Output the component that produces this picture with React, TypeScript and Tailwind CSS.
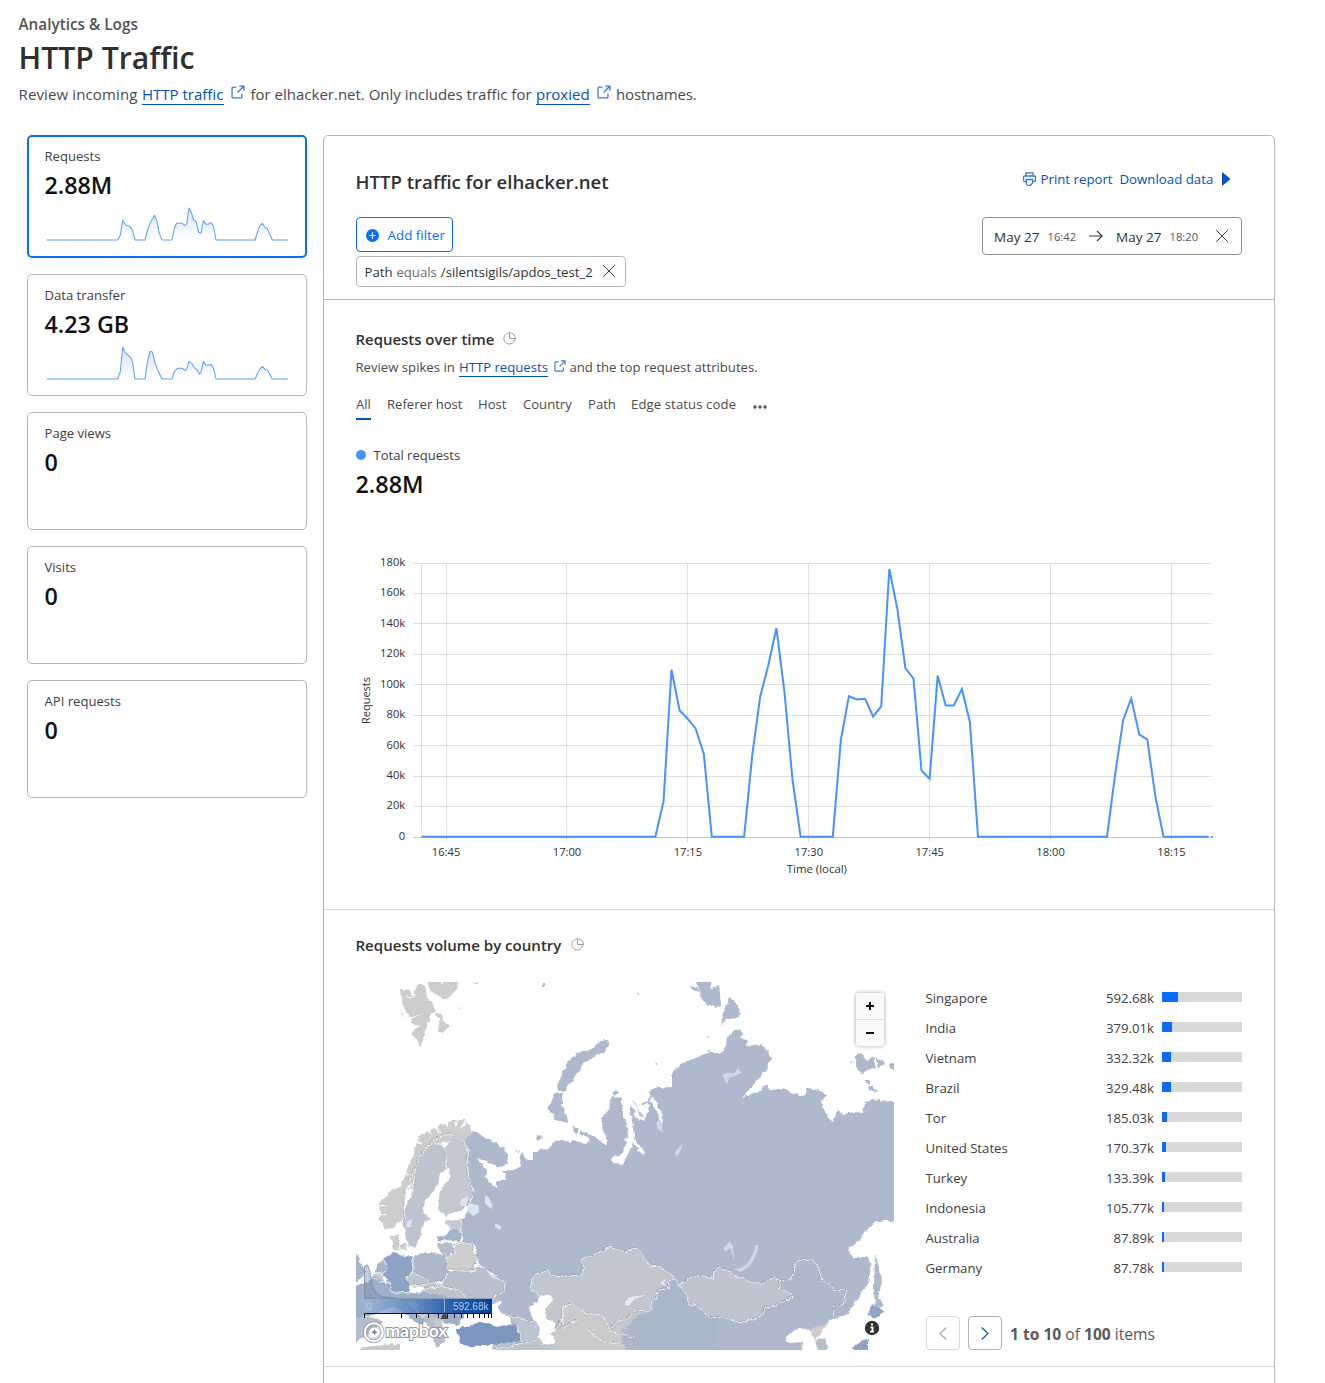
import React from "react";

const SERIES: [number, number][] = [
  [0, 837], [29, 837], [30, 801.7], [31, 670], [32, 710.8], [33, 719], [34, 729], [35, 754.3], [36, 837],
  [40, 837], [41, 756], [42, 697], [43, 665.5], [44, 628.5], [45, 692], [46, 780], [47, 837],
  [51, 837], [52, 740], [53, 696.5], [54, 699.7], [55, 699], [56, 716.8], [57, 706.7], [58, 569.3], [59, 609],
  [60, 668.3], [61, 679], [62, 770.8], [63, 779], [64, 676], [65, 705.7], [66, 705.7], [67, 689.2], [68, 722.5], [69, 837],
  [85, 837], [86, 775], [87, 720], [88, 699], [89, 734.7], [90, 740], [91, 797], [92, 837], [97.6, 837],
];
const LINE = SERIES.map(([m, y]) => `${(421.5 + m * 8.065).toFixed(1)},${y - 0.3}`).join(" ");

const REQ_SPARK =
  "80,345 293,345 301,330 308,286 316,299 330,305 337,315 345,345 375,345 383,315 390,295 404,271 411,290 418,325 426,345 456,345 463,310 470,295 487,295 494,302 500,296 507,249 514,262 521,285 529,290 536,322 543,324 550,287 558,298 565,298 572,292 580,303 588,345 705,345 718,305 727,295 735,308 742,311 757,345 803,345";
const DATA_SPARK =
  "80,345 293,345 301,322 308,249 315,266 325,274 333,282 338,296 345,345 375,345 382,296 390,262 397,264 404,294 414,320 426,345 456,345 463,323 472,313 487,313 495,320 500,316 507,292 515,298 522,310 530,316 538,330 543,325 550,292 558,304 575,302 582,318 588,345 705,345 718,318 727,307 735,316 742,318 757,345 803,345";

function Spark({ points, id }: { points: string; id: string }) {
  return (
    <svg className="block h-[44px] w-[250px]" viewBox="60 228 750 132">
      <defs>
        <linearGradient id={id} x1="0" y1="0" x2="0" y2="1">
          <stop offset="0" stopColor="#d5e4fb" />
          <stop offset="1" stopColor="#fff" />
        </linearGradient>
      </defs>
      <polygon points={points} fill={`url(#${id})`} />
      <polyline points={points} fill="none" stroke="#5ca0ff" strokeWidth="3.2" strokeLinejoin="round" />
    </svg>
  );
}

function Ext({ className }: { className: string }) {
  return (
    <svg className={className} viewBox="0 0 16 16" fill="none" stroke="#3b78d8" strokeWidth="1.5">
      <path d="M6 2.500H2.200a1 1 0 0 0-1 1v10.300a1 1 0 0 0 1 1h9.300a1 1 0 0 0 1-1V10M9.500 1.200h5.300v5.300M14.600 1.400 7.500 8.500" />
    </svg>
  );
}

function Pie() {
  return (
    <svg className="h-[13px] w-[13px]" viewBox="0 0 13 13" fill="none" stroke="#9a9a9a" strokeWidth="1">
      <path d="M4.500 1.500a5.400 5.400 0 1 0 7 6.500M6.500 .6v5.900h5.900A5.900 5.900 0 0 0 6.500 .6ZM6.500 .8a5.500 5.500 0 0 0-2 .7M12.200 6.500a5.500 5.500 0 0 1-.7 2" />
    </svg>
  );
}

function Cross({ className }: { className: string }) {
  return (
    <svg className={className} viewBox="0 0 12 12" stroke="#3f3f3f" strokeWidth="1">
      <path d="M.2.2 11.800 11.800M11.800.2.2 11.800" />
    </svg>
  );
}

function Card({ label, value, h, active, points, id }: { label: string; value: string; h: string; active?: boolean; points?: string; id?: string }) {
  return (
    <div
      className={`${h} rounded-[5px] bg-white ${active ? "border-2 border-[#0a6cff] pl-[15px] pt-[9px]" : "border border-[#b6b7b7] pl-[16px] pt-[10px]"}`}
    >
      <div className="h-[20px] pl-[0.500px] text-[13.100px] leading-[20px] text-[#404040]">{label}</div>
      <div className="mt-[3px] h-[32px] pl-[0.500px] text-[23.300px] font-semibold leading-[32px] text-[#111]">{value}</div>
      {points && id && (
        <div className="-ml-[4px]">
          <Spark points={points} id={id} />
        </div>
      )}
    </div>
  );
}

function TrafficChart() {
  return (
    <svg className="block h-[340px] w-[886px]" viewBox="356 545 886 340" fontFamily="'Open Sans','Noto Sans',sans-serif" fontSize="11.200" fill="#303030">
      <g stroke="#000" strokeOpacity=".12" shapeRendering="crispEdges">
        {[563.5, 593.5, 623.5, 654.5, 684.5, 715.5, 745.5, 776.5, 806.5].map((y) => (
          <path key={y} d={`M413 ${y}H1212`} />
        ))}
        {[446.5, 566.5, 687.5, 808.5, 929.5, 1050.5, 1171.5].map((x) => (
          <path key={x} d={`M${x} 563V842`} />
        ))}
        <path d="M421.5 563V837" />
        <path d="M413 837.5H1212" strokeOpacity=".22" />
      </g>
      <polyline points={LINE} fill="none" stroke="#4693ff" strokeWidth="2" strokeLinejoin="miter" />
      <path d="M1211 836.7h2" stroke="#4693ff" strokeWidth="1.6" />
      {["180k", "160k", "140k", "120k", "100k", "80k", "60k", "40k", "20k", "0"].map((t, i) => (
        <text key={t} x="405.2" y={565.800 + i * 30.45} textAnchor="end">{t}</text>
      ))}
      {["16:45", "17:00", "17:15", "17:30", "17:45", "18:00", "18:15"].map((t, i) => (
        <text key={t} x={446.1 + i * 120.9} y="856" textAnchor="middle">{t}</text>
      ))}
      <text x="816.9" y="873" textAnchor="middle" fontSize="11.400">Time (local)</text>
      <text transform="translate(369.5 700.5) rotate(-90)" textAnchor="middle" fontSize="11">Requests</text>
    </svg>
  );
}

const BORDERS = [
  "M190 145 180 120 200 70 215 40 250 0 285 25 290 90",
  "M250 0 300 -20 335 0 355 30 350 70 358 120 372 160 350 200 335 215",
  "M190 145 165 150 163 240",
  "M335 235 332 265 335 305 300 300 265 305",
  "M335 308 315 315 310 345 290 350 290 385",
  "M335 308 370 312 370 340 385 358 370 380 375 395 330 392 290 385",
  "M385 378 405 382 420 405 465 425 462 455 440 465",
  "M100 355 110 380 100 405 118 430 120 450",
  "M185 350 190 400 165 410 180 435 175 458 120 455",
  "M190 400 225 415 240 430 280 425 295 395 290 385",
  "M165 410 190 402M175 440 215 435 240 430M210 455 230 445 275 440 330 450 350 475",
  "M75 395 100 405M60 410 90 425 120 430",
  "M540 435 550 410 590 388 605 405 650 408 695 405 700 375 690 352 720 350 750 335 780 322 828 335 845 325 862 325 885 355 900 378 930 380 950 395 975 415",
  "M975 415 955 425 957 445 925 450 920 475 905 480 905 510 860 512 830 535 800 545 775 570 815 585 850 590",
  "M540 435 545 450 560 455 570 480",
  "M638 565 638 500 665 490 710 520 760 525 775 570 M638 565 680 540 700 560 760 605 810 610M638 530 615 570",
  "M470 525 515 535 550 545 560 560M500 555 515 610M425 630 515 610 560 600",
  "M985 433 1010 420 1030 405 1065 408 1090 415 1090 395 1105 382 1140 392 1150 410 1180 412 1200 425 1230 432 1270 413 1290 420 1285 448 1305 450 1330 470 1300 485 1285 490 1275 500 1245 500 1240 520 1225 533 1170 548 1120 532 1070 532 1065 520 1035 495 1015 493 1010 465 985 433 975 415",
  "M1290 422 1320 422 1333 400 1335 370 1350 360 1385 357 1405 380 1415 420 1448 440 1450 455 1490 448 1480 490 1450 498 1450 530",
  "M190 505 190 478 245 478M200 525 245 520 290 540",
];

const LEGEND_TICKS = [401.5, 416.5, 428.5, 438.5, 447.5, 454.5, 461.5, 467.5, 473.5, 479.5, 484.5, 488.5];

function MapView() {
  return (
    <svg className="block h-[368px] w-[538px]" viewBox="356 982 538 368">
      <defs>
        <filter id="coast" x="0" y="0" width="1" height="1" filterUnits="objectBoundingBox" colorInterpolationFilters="sRGB">
          <feTurbulence type="fractalNoise" baseFrequency=".18" numOctaves="3" seed="4" result="n" />
          <feDisplacementMap in="SourceGraphic" in2="n" scale="4.500" xChannelSelector="R" yChannelSelector="G" />
        </filter>
        <linearGradient id="legend" x1="0" x2="1">
          <stop offset="0" stopColor="#9fb5d6" stopOpacity=".7" />
          <stop offset=".35" stopColor="#5f88c4" stopOpacity=".85" />
          <stop offset=".7" stopColor="#1f57ae" stopOpacity=".95" />
          <stop offset="1" stopColor="#003f9f" />
        </linearGradient>
      </defs>
      <g filter="url(#coast)">
        <rect x="352" y="978" width="546" height="376" fill="#fff" />
        <path
          fill="#aeb9cd"
          d="M463 1140 465 1134 470 1131 477 1132 482 1136 497 1144 505 1150 509 1156 508 1164 500 1167 490 1163 483 1160 477 1158 483 1166 487 1172 486 1178 491 1185 497 1187 497 1180 505 1180 506 1174 500 1171 509 1171 520 1168 521 1165 518 1157 522 1153 528 1160 533 1160 533 1152 541 1150 549 1148 555 1142 564 1141 570 1143 574 1140 580 1143 586 1144 591 1139 580 1134 580 1131 594 1136 606 1146 608 1140 602 1128 603 1115 608 1111 611 1097 622 1098 622 1114 627 1124 628 1140 623 1152 611 1160 612 1164 622 1165 627 1156 632 1146 634 1135 630 1108 633 1100 639 1110 645 1118 650 1105 641 1105 648 1100 652 1088 672 1087 672 1073 683 1063 707 1053 720 1053 726 1046 727 1037 737 1028 743 1033 740 1038 748 1041 746 1046 762 1044 768 1052 771 1058 767 1070 753 1085 742 1098 758 1091 767 1085 770 1091 780 1088 787 1089 790 1093 805 1096 807 1088 820 1090 826 1095 822 1103 828 1117 833 1122 838 1110 843 1114 855 1112 863 1113 865 1103 872 1099 900 1103 900 1221 878 1221 868 1228 860 1240 848 1250 853 1257 868 1257 871 1267 868 1283 858 1298 847 1315 837 1317 828 1323 810 1332 802 1327 785 1337 790 1343 803 1342 802 1356 500 1356 500 1310 494 1300 505 1283 483 1267 475 1257 476 1246 462 1242 461 1223 467 1212 474 1193 468 1180 468 1150Z"
        />
        <g fill="#aeb9cd">
          <path d="M601 1041 607 1040 609 1046 605 1051 592 1058 583 1064 577 1074 571 1083 565 1091 558 1091 557 1085 563 1073 567 1063 576 1054 590 1050Z" />
          <path d="M555 1092 563 1093 561 1105 567 1116 568 1123 556 1120 553 1114 547 1109 552 1100Z" />
          <path d="M574 1126 579 1130 577 1134 573 1130ZM612 1092l4-3 2 4-4 3ZM536 1136l5-1 1 4-5 3ZM556 1142l6-2-2 4ZM516 1150l4 0-2 4Z" />
          <path d="M697 980 699 992 706 1003 716 1008 721 1004 719 985 710 989 712 980ZM690 986l6 1 3 4-5 1Z" />
          <path d="M729 998 735 1002 741 1012 738 1018 728 1019 721 1024 724 1013Z" />
          <path d="M856 1056 861 1053 867 1061 872 1056 883 1060 884 1064 878 1069 866 1070 862 1073 856 1069ZM889 1063 897 1064 897 1070 890 1069ZM867 1085 873 1085 878 1092 869 1091ZM850 1060l2 2-2 2ZM866 1080l3 0 0 4-3-1Z" />
          <path d="M875 1253 880 1270 881 1285 878 1298 884 1306 875 1307 874 1290Z" />
          <path d="M542 983h3v3h-3ZM706 1051l3-1v3ZM706 1037l3-1v3ZM655 1063l3-1v3ZM637 993l2 0 0 2Z" />
        </g>
        <g fill="none" stroke="#fff" strokeLinecap="round" strokeLinejoin="round">
          <path strokeWidth="4" d="M631 1102 636 1110 638 1118 642 1119M652 1100 658 1109 661 1118 660 1124" />
          <path strokeWidth="3.4" d="M627 1140 634 1142 640 1149 643 1153" />
          <path strokeWidth="2" d="M641 1108 648 1104M822 1102 829 1116M875 1060l2 8" />
        </g>
        <g fill="#cdcdcd">
          <path d="M400 989 410 990 413 998 416 988 420 985 425 985 428 1000 433 1004 436 1010 430 1014 428 1024 424 1034 421 1046 412 1034 412 1030 420 1027 411 1023 412 1018 422 1014 410 1017 405 1010 401 1000Z" />
          <path d="M426 978H459L457 990 447 1000 439 997 430 990ZM435 1012 441 1013 442 1020 449 1026 442 1034 437 1031 440 1024Z" />
          <path d="M457 1008l2-1 1 2ZM463 1006l2 0-1 2ZM401 1010l2 6 1 3-2-4ZM475 982h3v2h-3Z" />
        </g>
        <path d="M413 986 415 998M405 996 411 998M441 979 443 985" stroke="#fff" strokeWidth="1.200" fill="none" />
        <g transform="translate(350 1140) scale(.33333)">
          <path fill="#cdcdcd" d="M340 0 370 -20 345 -60 310 -60 240 -30 205 -10 190 40 170 95 150 140 120 155 90 185 90 240 105 265 130 265 150 245 163 215 170 140 190 130 200 70 220 35 280 5Z" />
          <path d="M230 -35 245 -15M258 -45 268 -20M290 -65 292 -40M320 -65 318 -40M345 -55 335 -35M190 0 215 12M88 200 110 195M90 225 108 220M160 95 175 105" stroke="#fff" strokeWidth="5" fill="none" />
          <path fill="#bdc3cf" d="M190 145 200 70 220 35 255 10 285 25 292 90 270 100 265 130 245 155 225 180 220 220 238 235 215 260 210 300 195 320 175 322 168 290 155 240 168 200Z" />
          <path fill="#c4c9d0" d="M285 20 320 -15 345 5 355 60 358 120 372 160 340 210 285 228 265 210 268 160 305 105 290 85Z" />
          <path fill="#c5cad1" d="M285 240 330 240 332 275 318 275 290 255Z" />
          <path fill="#a3b3cb" d="M262 290 290 285 300 265 335 280 335 305 300 302 265 305Z" />
          <path fill="#b4becd" d="M262 308 310 310 312 345 280 345 262 320Z" />
          <path fill="#cdcdcd" d="M335 308 370 312 370 340 385 358 370 380 375 395 330 392 290 385 290 350 312 345 315 315Z" />
          <path fill="#cdcdcd" d="M122 290 145 280 150 330 130 330ZM150 315l18-5 3 18-15 3Z" />
          <path fill="#bac1ce" d="M375 385 405 382 420 405 465 425 462 455 430 470 455 485 425 495 400 478 355 480 330 450 275 440 295 395Z" />
          <path fill="#aeb9cd" d="M190 350 225 335 285 345 292 380 295 400 280 425 240 430 190 402Z" />
          <path fill="#bcc4ce" d="M165 410 190 402 225 415 245 430 215 440 175 440Z" />
          <path fill="#c9cacc" d="M215 440 245 430 275 430 272 445 230 450Z" />
          <path fill="#bdc3cf" d="M210 455 230 450 275 442 330 450 355 485 350 520 270 515 200 490Z" />
          <path fill="#8da3c5" d="M100 355 120 345 130 335 150 345 185 350 190 400 165 410 180 435 175 458 120 458 118 430 100 405 110 380Z" />
          <path fill="#a7b5cb" d="M80 375 100 358 108 380 98 400 72 395ZM0 340 25 345 35 380 50 395 25 425 0 415Z" />
          <path fill="#c5c7ca" d="M65 400 98 400 98 420 70 415Z" />
          <path fill="#9dafc9" d="M10 440 55 425 70 410 118 430 120 460 240 460 340 480 350 520 325 555 270 545 190 480 170 490 225 540 215 560 150 510 130 500 30 535 0 530Z" />
          <path fill="#b4becd" d="M10 535 60 530 100 545 40 590 10 610ZM200 500 240 510 275 560 295 580 280 610 260 625 240 570Z" />
          <path fill="#c7c9cc" d="M95 615 150 612 150 635 20 635 40 622ZM245 535l35 5 0 30-20-10Z" />
          <path fill="#fff" d="M330 545 345 520 395 505 425 495 455 480 440 515 475 530 485 550 440 560 390 545 355 560Z" />
          <path fill="#7b96bf" d="M320 565 350 560 390 545 440 560 500 553 515 600 480 608 425 615 365 622 330 610Z" />
          <path fill="#bcc4cf" d="M425 615 515 605 500 555 475 530 515 535 560 560 575 610 620 615 610 635 425 635Z" />
          <path fill="#c2c6ce" d="M540 435 550 410 590 388 605 405 650 408 695 405 700 375 690 352 720 350 750 335 780 322 828 335 845 325 862 325 885 355 900 378 930 380 950 395 975 415 955 425 957 445 925 450 920 475 905 480 905 510 860 512 830 535 775 570 810 610 820 640 610 640 560 470 545 450Z" />
          <path fill="#cacaca" d="M638 500 665 490 710 520 760 525 775 570 815 560 815 610 840 640 620 640 610 575 638 560Z" />
          <path fill="#c2c6ce" d="M820 520 905 512 870 560 830 570 790 560Z" />
          <path fill="#abb7ca" d="M905 510 860 530 830 560 850 600 860 640 1100 640 1100 520 1010 480 975 415 955 430 925 450Z" />
          <path fill="#bec4d0" d="M985 433 1010 420 1030 405 1065 408 1090 415 1090 395 1105 382 1140 392 1150 410 1180 412 1200 425 1230 432 1270 413 1290 420 1285 448 1305 450 1330 470 1300 485 1285 490 1275 500 1245 500 1240 520 1225 533 1170 548 1120 532 1070 532 1065 520 1035 495 1015 493 1010 465Z" />
          <path fill="#fff" d="M570 470 600 465 608 480 590 500 585 530 615 550 615 575 600 580 615 600 612 615 580 612 565 590 570 565 545 530 540 505Z" />
        </g>
        <path fill="#cbcbcb" d="M810 1330 828 1322 830 1320 822 1332 815 1340Z" />
        <path fill="#b7c0ce" d="M815 1340 825 1338 828 1352 818 1352Z" />
        <path fill="#8fa5c7" d="M872 1304 885 1312 876 1318 868 1316ZM851 1350 858 1342 868 1338 868 1350Z" />
      </g>
      <g transform="translate(350 1140) scale(.33333)">
        <path fill="#dae4f3" d="M335 175 355 170 350 200 330 195ZM355 190 385 195 388 215 370 228 355 215ZM405 165 415 170 427 195 425 208 405 190ZM435 250l20 10-5 10-15-8ZM170 245l15-8-2 25-15 0Z" />
        <path fill="#e6ebf2" d="M825 485l15-15 50-5-35 12-20 20-10-2ZM930 430l20-15-10 15 12 12Z" />
      </g>
      <g fill="#cbd8eb">
        <path d="M722 1075 727 1073 735 1073 738 1067 739 1071 743 1072 735 1076 729 1078 727 1085 725 1080ZM656 1122 661 1120 663 1132 658 1130ZM681 1145l2-1-4 10-3 3-1-5Z" />
        <path d="M755.500 1245h2.500c0 10-8 25-18 26.500l-6-2c11-1 18-9 21.500-24.500ZM723 1248l4-3 2-4 4 5 1 14-2-6-2-6-3 3-3-1Z" />
      </g>
      <g filter="url(#coast)">
        <rect x="352" y="978" width="546" height="376" fill="none" />
        <g transform="translate(350 1140) scale(.33333)" fill="none" strokeLinejoin="round">
          {BORDERS.map((d, i) => (
            <path key={i} d={d} stroke="#717b8c" strokeOpacity=".6" strokeWidth="3" transform="translate(-1.5 -1.5)" />
          ))}
          {BORDERS.map((d, i) => (
            <path key={i} d={d} stroke="#f3f4f6" strokeWidth="2.900" />
          ))}
        </g>
      </g>
      <path d="M364.500 1298V1268c3-8 5 0 7 13 3 14 8 16 16 16l10 1.500Z" fill="#7d93b5" fillOpacity=".45" stroke="#7788a0" strokeWidth=".8" />
      <path d="M364.500 1298.500V1265.500M364 1298.500H492" stroke="#8794a8" strokeWidth=".8" fill="none" />
      <rect x="364" y="1299" width="128" height="14" fill="url(#legend)" />
      <path d="M444.500 1299v14" stroke="#9ab0d0" />
      <g fontFamily="'Liberation Sans',Arial,sans-serif" fontSize="10" fill="#b9c6dc">
        <text x="366.500" y="1310">0</text>
        <text x="488.500" y="1310" textAnchor="end">592.68k</text>
      </g>
      <path d={"M364.500 1318v-4.500h127v4.500" + LEGEND_TICKS.map((x) => `M${x} 1314v4`).join("")} fill="none" stroke="#111" />
      <path d="M444.500 1312l4 7h-8Z" fill="#444" />
      <g>
        <circle cx="373.700" cy="1332.300" r="9" fill="none" stroke="#8c96a3" strokeWidth="4" strokeOpacity=".7" />
        <circle cx="373.700" cy="1332.300" r="9" fill="#7e8996" fillOpacity=".25" stroke="#fff" strokeWidth="2" />
        <path d="M369.500 1337c-1.500-5 0-9.500 5-9.500 4.500 0 6 5.500 3 8-2 1.800-5 2-8 1.500Z" fill="#fff" />
        <path d="M374.500 1329l1 2.200 2.200 1-2.200 1-1 2.200-1-2.200-2.200-1 2.200-1Z" fill="#77828f" />
        <text
          x="385.500"
          y="1337"
          fontFamily="Lato,'Open Sans',sans-serif"
          fontWeight="700"
          fontSize="17.500"
          textLength="62"
          fill="#fff"
          stroke="#8c96a3"
          strokeWidth="2"
          paintOrder="stroke"
        >
          mapbox
        </text>
      </g>
      <circle cx="872" cy="1328" r="7.200" fill="#333" />
      <path d="M872 1323.500v2M870.500 1327.300h2v4M870 1331.600h4" stroke="#fff" strokeWidth="1.800" fill="none" />
    </svg>
  );
}

const COUNTRIES: [string, string, number][] = [
  ["Singapore", "592.68k", 16],
  ["India", "379.01k", 10],
  ["Vietnam", "332.32k", 9],
  ["Brazil", "329.48k", 9],
  ["Tor", "185.03k", 5],
  ["United States", "170.37k", 4],
  ["Turkey", "133.39k", 3],
  ["Indonesia", "105.77k", 2],
  ["Australia", "87.89k", 2],
  ["Germany", "87.78k", 2],
];

const TABS: [string, string][] = [
  ["All", "w-[15px]"],
  ["Referer host", "w-[75px]"],
  ["Host", "w-[29px]"],
  ["Country", "w-[49px]"],
  ["Path", "w-[27px]"],
  ["Edge status code", "w-[106px] tracking-[0.120px]"],
];

export default function App() {
  return (
    <div className="h-[1383px] w-[1325px] overflow-hidden bg-white font-['Open_Sans','Noto_Sans',sans-serif] text-[#404040]">
      <header className="h-[135px] whitespace-nowrap pl-[18.500px] pt-[14px]">
        <div className="h-[20px] text-[15.300px] font-semibold leading-[20px] text-[#555]">Analytics &amp; Logs</div>
        <h1 className="mt-[3px] h-[42px] text-[30.200px] font-semibold leading-[42px] text-[#2f2f2f]">HTTP Traffic</h1>
        <p className="mt-[4px] flex h-[22px] items-start text-[15px] leading-[22px] text-[#4a4a4a]">
          <span className="w-[123.500px] tracking-[0.130px]">Review incoming</span>
          <a className="h-[22px] w-[82px] border-b border-[#0051c3] text-[#0051c3]">HTTP traffic</a>
          <Ext className="ml-[6.500px] mt-[2px] h-[14px] w-[14px]" />
          <span className="ml-[6px] w-[285.500px]">for elhacker.net. Only includes traffic for</span>
          <a className="h-[22px] w-[54px] border-b border-[#0051c3] text-[#0051c3]">proxied</a>
          <Ext className="ml-[6.500px] mt-[2px] h-[14px] w-[14px]" />
          <span className="ml-[5.500px] tracking-[-0.100px]">hostnames.</span>
        </p>
      </header>

      <div className="flex">
        <aside className="ml-[27px] flex w-[280px] flex-col gap-4">
          <Card label="Requests" value="2.88M" h="h-[123px]" active points={REQ_SPARK} id="spark-req" />
          <Card label="Data transfer" value="4.23 GB" h="h-[122px]" points={DATA_SPARK} id="spark-data" />
          <Card label="Page views" value="0" h="h-[118px]" />
          <Card label="Visits" value="0" h="h-[118px]" />
          <Card label="API requests" value="0" h="h-[118px]" />
        </aside>

        <main className="ml-4 h-[1260px] w-[952px] rounded-t-[5px] border border-[#b6b7b7]">
          <section className="flex h-[164px] justify-between border-b border-[#b6b7b7] pl-8 pr-8">
            <div className="flex flex-col items-start">
              <h2 className="-ml-[0.500px] mt-[32px] h-[28px] whitespace-nowrap text-[18.600px] font-semibold leading-[28px] text-[#313131]">HTTP traffic for elhacker.net</h2>
              <button className="mt-[21px] flex h-[35px] w-[97px] items-center rounded-[4px] border border-[#0a6cff] pl-[8.500px] text-[13.400px] text-[#0a6cff]">
                <svg className="mt-px h-[13px] w-[13px]" viewBox="0 0 13 13">
                  <circle cx="6.500" cy="6.500" r="6.500" fill="#0a6cff" />
                  <path d="M6.500 3v7M3 6.500h7" stroke="#d5e6ff" strokeWidth="1.200" />
                </svg>
                <span className="ml-[9px] mt-[2px] whitespace-nowrap">Add filter</span>
              </button>
              <div className="mt-[4px] flex h-[31px] w-[270px] items-center whitespace-nowrap rounded-[4px] border border-[#b6b7b7] pl-[7.500px] pt-[2px] text-[13.150px] text-[#313131]">
                <span>Path</span>
                <span className="ml-[4px] text-[#6b6b6b]">equals</span>
                <span className="ml-[4px]">/silentsigils/apdos_test_2</span>
                <Cross className="mb-[3px] ml-auto mr-[10px] h-[12px] w-[12px]" />
              </div>
            </div>
            <div className="flex flex-col items-end">
              <div className="mr-[12px] mt-[33px] flex h-[20px] items-center whitespace-nowrap text-[13.250px] leading-[20px] text-[#0051c3]">
                <svg className="h-[14px] w-[13px]" viewBox="0 0 13 14" fill="none" stroke="#3b78d8" strokeWidth="1.300">
                  <path d="M3 4V.8h7V4M3.200 9.500H1.500a1 1 0 0 1-1-1V5a1 1 0 0 1 1-1h10a1 1 0 0 1 1 1v3.500a1 1 0 0 1-1 1h-1M3.300 7.500h6.400v3.200l-2.300 2.600H5.200a1.900 1.900 0 0 1-1.900-1.900Z" />
                </svg>
                <span className="ml-[5px] w-[79px]">Print report</span>
                <span className="w-[102.500px]">Download data</span>
                <svg className="h-[14px] w-[8px]" viewBox="0 0 8 14">
                  <path d="M0 0 8 6.500v1L0 14Z" fill="#0051c3" />
                </svg>
              </div>
              <div className="mt-[28px] flex h-[38px] w-[260px] items-center whitespace-nowrap rounded-[4px] border border-[#8f9090] pl-[11px] text-[13.500px] text-[#313131]">
                <span className="mt-[2px] w-[53.500px]">May 27</span>
                <span className="mt-[2px] w-[41.500px] text-[11.200px] text-[#555]">16:42</span>
                <svg className="h-[12px] w-[14px]" viewBox="0 0 14 12" fill="none" stroke="#3f3f3f" strokeWidth="1.100">
                  <path d="M0 6h13M8 1l5.200 5L8 11" />
                </svg>
                <span className="ml-[13px] mt-[2px] w-[53.500px]">May 27</span>
                <span className="mt-[2px] text-[11.200px] text-[#555]">18:20</span>
                <Cross className="ml-auto mr-[13px] h-[12px] w-[12px]" />
              </div>
            </div>
          </section>

          <section className="h-[610px] border-b border-[#d9d9d9] pl-8">
            <div className="flex h-[50px] items-end whitespace-nowrap">
              <h3 className="-ml-[0.500px] text-[14.950px] font-semibold leading-[22px] text-[#313131]">Requests over time</h3>
              <div className="mb-[5px] ml-[9px]">
                <Pie />
              </div>
            </div>
            <p className="mt-[7px] flex h-[21px] whitespace-nowrap text-[13.150px] leading-[20px] text-[#4a4a4a]">
              <span className="-ml-[0.500px] w-[103.500px]">Review spikes in</span>
              <a className="h-[20px] w-[89px] border-b border-[#0051c3] text-[#0051c3]">HTTP requests</a>
              <Ext className="ml-[6px] mt-[3px] h-[12px] w-[12px]" />
              <span className="ml-[3.500px]">and the top request attributes.</span>
            </p>
            <nav className="mt-[16px] flex h-[26px] gap-4 whitespace-nowrap text-[13.100px] leading-[20px] text-[#4a4a4a]">
              {TABS.map(([t, w]) => (
                <div key={t} className={`${w} h-[26px] ${t === "All" ? "border-b-2 border-[#0051c3]" : ""}`}>{t}</div>
              ))}
              <svg className="mt-[11px] h-[4px] w-[14px]" viewBox="0 0 14 4" fill="#555">
                <circle cx="2" cy="2" r="1.700" />
                <circle cx="7" cy="2" r="1.700" />
                <circle cx="12" cy="2" r="1.700" />
              </svg>
            </nav>
            <div className="mt-[25px] flex h-[20px] items-center gap-[7.500px] text-[13.050px]">
              <span className="h-[10px] w-[10px] rounded-full bg-[#4693ff]" />
              <span className="mt-[2px]">Total requests</span>
            </div>
            <div className="-ml-[0.500px] mt-[3px] h-[32px] text-[23.400px] font-semibold leading-[32px] text-[#111]">2.88M</div>
            <div className="mt-[45px]">
              <TrafficChart />
            </div>
          </section>

          <section className="h-[457px] border-b border-[#d9d9d9] pl-8">
            <div className="flex h-[46px] items-end whitespace-nowrap">
              <h3 className="-ml-[0.500px] text-[15.050px] font-semibold leading-[22px] text-[#313131]">Requests volume by country</h3>
              <div className="mb-[5px] ml-[10px]">
                <Pie />
              </div>
            </div>
            <div className="mt-[26px] flex">
              <div className="relative h-[368px] w-[538px]">
                <MapView />
                <div className="absolute right-[10px] top-[11px] flex h-[53px] w-[28px] flex-col rounded-[2px] bg-[#f9f9f9] shadow-[0_0_4px_rgba(0,0,0,0.35)]">
                  <span className="flex h-[27px] items-center justify-center border-b border-[#ddd]">
                    <svg className="h-[8px] w-[8px]" viewBox="0 0 8 8" stroke="#111" strokeWidth="2">
                      <path d="M4 0v8M0 4h8" />
                    </svg>
                  </span>
                  <span className="flex h-[25px] items-center justify-center">
                    <svg className="h-[8px] w-[8px]" viewBox="0 0 8 8" stroke="#111" strokeWidth="2">
                      <path d="M0 4h8" />
                    </svg>
                  </span>
                </div>
              </div>
              <div className="ml-[31.500px] w-[316.500px] pt-[1px]">
                {COUNTRIES.map(([name, v, w]) => (
                  <div key={name} className="flex h-[30px] items-center whitespace-nowrap text-[13.200px] leading-[20px]">
                    <span className="flex-1">{name}</span>
                    <span>{v}</span>
                    <span className="mb-[2px] ml-[8px] h-[10px] w-[80px] bg-[#d9d9d9]">
                      <span className="block h-[10px] bg-[#0a6cff]" style={{ width: w }} />
                    </span>
                  </div>
                ))}
                <div className="ml-[0.500px] mt-[33px] flex items-center gap-2">
                  <span className="flex h-[34px] w-[34px] items-center justify-center rounded-[4px] border border-[#d9d9d9]">
                    <svg className="h-[13px] w-[8px]" viewBox="0 0 8 13" fill="none" stroke="#aaa" strokeWidth="1.200">
                      <path d="M7.300.5 1 6.500l6.300 6" />
                    </svg>
                  </span>
                  <span className="flex h-[34px] w-[34px] items-center justify-center rounded-[4px] border border-[#b0b0b0]">
                    <svg className="h-[13px] w-[8px]" viewBox="0 0 8 13" fill="none" stroke="#0051c3" strokeWidth="1.200">
                      <path d="M.7.5 7 6.500l-6.300 6" />
                    </svg>
                  </span>
                  <span className="mt-[2px] whitespace-nowrap text-[15.600px] leading-[20px] text-[#595959]">
                    <b>1 to 10</b> of <b>100</b> items
                  </span>
                </div>
              </div>
            </div>
          </section>
        </main>
      </div>
    </div>
  );
}
